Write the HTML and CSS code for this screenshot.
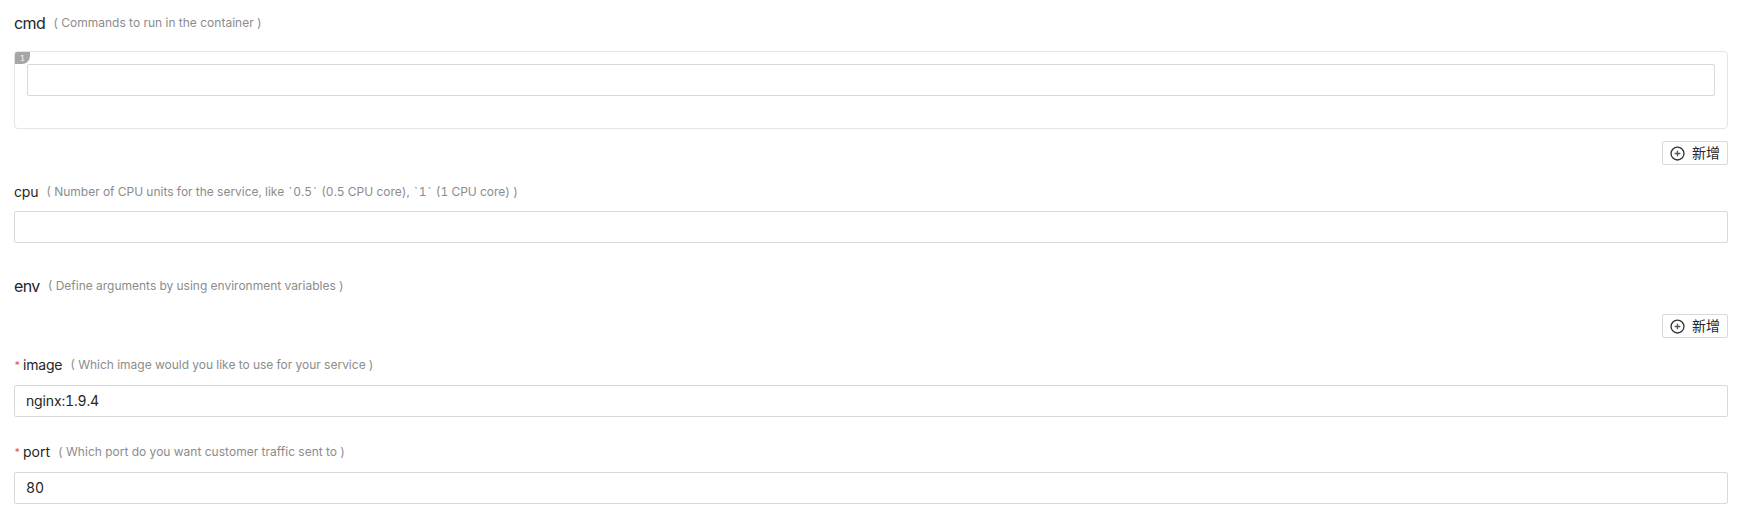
FILE: index.html
```html
<!DOCTYPE html>
<html lang="en">
<head>
<meta charset="utf-8">
<title>Service</title>
<link rel="stylesheet" href="styles.css">
</head>
<body>
<form class="form">
  <section class="group cmd">
    <div class="label large"><span class="name">cmd</span><span class="hint">( Commands to run in the container )</span></div>
    <div class="card"><span class="index">1</span><div class="input"></div></div>
    <button class="add" type="button"><svg class="plus" viewBox="0 0 16 16"><circle cx="8" cy="8" r="6.9"/><path d="M8 5v6M5 8h6"/></svg><span class="text">新增</span></button>
  </section>
  <section class="group cpu">
    <div class="label"><span class="name">cpu</span><span class="hint">( Number of CPU units for the service, like <span class="tick">`</span>0.5<span class="tick">`</span> (0.5 CPU core), <span class="tick">`</span>1<span class="tick">`</span> (1 CPU core) )</span></div>
    <div class="input"></div>
  </section>
  <section class="group env">
    <div class="label large"><span class="name">env</span><span class="hint">( Define arguments by using environment variables )</span></div>
    <button class="add" type="button"><svg class="plus" viewBox="0 0 16 16"><circle cx="8" cy="8" r="6.9"/><path d="M8 5v6M5 8h6"/></svg><span class="text">新增</span></button>
  </section>
  <section class="group image">
    <div class="label"><span class="star">*</span><span class="name">image</span><span class="hint">( Which image would you like to use for your service )</span></div>
    <div class="input">nginx:1.9.4</div>
  </section>
  <section class="group port">
    <div class="label"><span class="star">*</span><span class="name">port</span><span class="hint">( Which port do you want customer traffic sent to )</span></div>
    <div class="input">80</div>
  </section>
</form>
</body>
</html>
```
FILE: styles.css
```css
* { box-sizing: border-box; }
body {
  margin: 0;
  background: #fff;
  color: #262626;
  font: 14px/22px Inter, "Noto Sans CJK SC", sans-serif;
  font-variant-numeric: tabular-nums;
}
.form { padding: 12px 23px 0 14px; }
.group { display: flex; flex-direction: column; }
.label { display: flex; align-items: center; height: 22px; white-space: nowrap; }
.name { margin-right: 8px; letter-spacing: -0.2px; }
.large .name { font-size: 16px; letter-spacing: -0.6px; }
.hint { color: #8c8c8c; font-size: 12px; }
.cmd .hint, .port .hint { letter-spacing: 0.03px; }
.tick { padding: 0 1px; }
.star { width: 9px; color: #e8484d; font-size: 10px; }
.port .name { letter-spacing: 0; }
.input {
  height: 32px;
  padding: 4px 11px;
  border: 1px solid #d9d9d9;
  border-radius: 2px;
  background: #fff;
  letter-spacing: -0.15px;
}
.card {
  position: relative;
  height: 78px;
  margin-top: 17px;
  padding: 12px;
  border: 1px solid #e5e5e5;
  border-radius: 4px;
}
.index {
  position: absolute;
  top: 0;
  left: 0;
  width: 15px;
  height: 12px;
  border-radius: 2px 0 8px 0;
  background: #a6a6a6;
  color: #fff;
  font-size: 7px;
  line-height: 13px;
  text-align: center;
}
.add {
  display: flex;
  align-items: center;
  align-self: flex-end;
  gap: 7px;
  width: 66px;
  height: 24px;
  padding: 0 7px;
  border: 1px solid #d9d9d9;
  border-radius: 2px;
  background: #fff;
  color: #262626;
  font: 14px/20px "Noto Sans CJK SC", sans-serif;
  white-space: nowrap;
}
.text { padding-bottom: 2px; }
.plus { width: 15px; height: 15px; flex: none; fill: none; stroke: #333; stroke-width: 1.4; }
.plus path { stroke: #555; }
.cmd .add { margin-top: 12px; }
.cpu { margin-top: 16px; }
.cpu .input { margin-top: 8px; }
.env { margin-top: 32px; }
.env .add { margin-top: 17px; }
.image { margin-top: 16px; }
.image .input, .port .input { margin-top: 9px; }
.port { margin-top: 24px; }
```
